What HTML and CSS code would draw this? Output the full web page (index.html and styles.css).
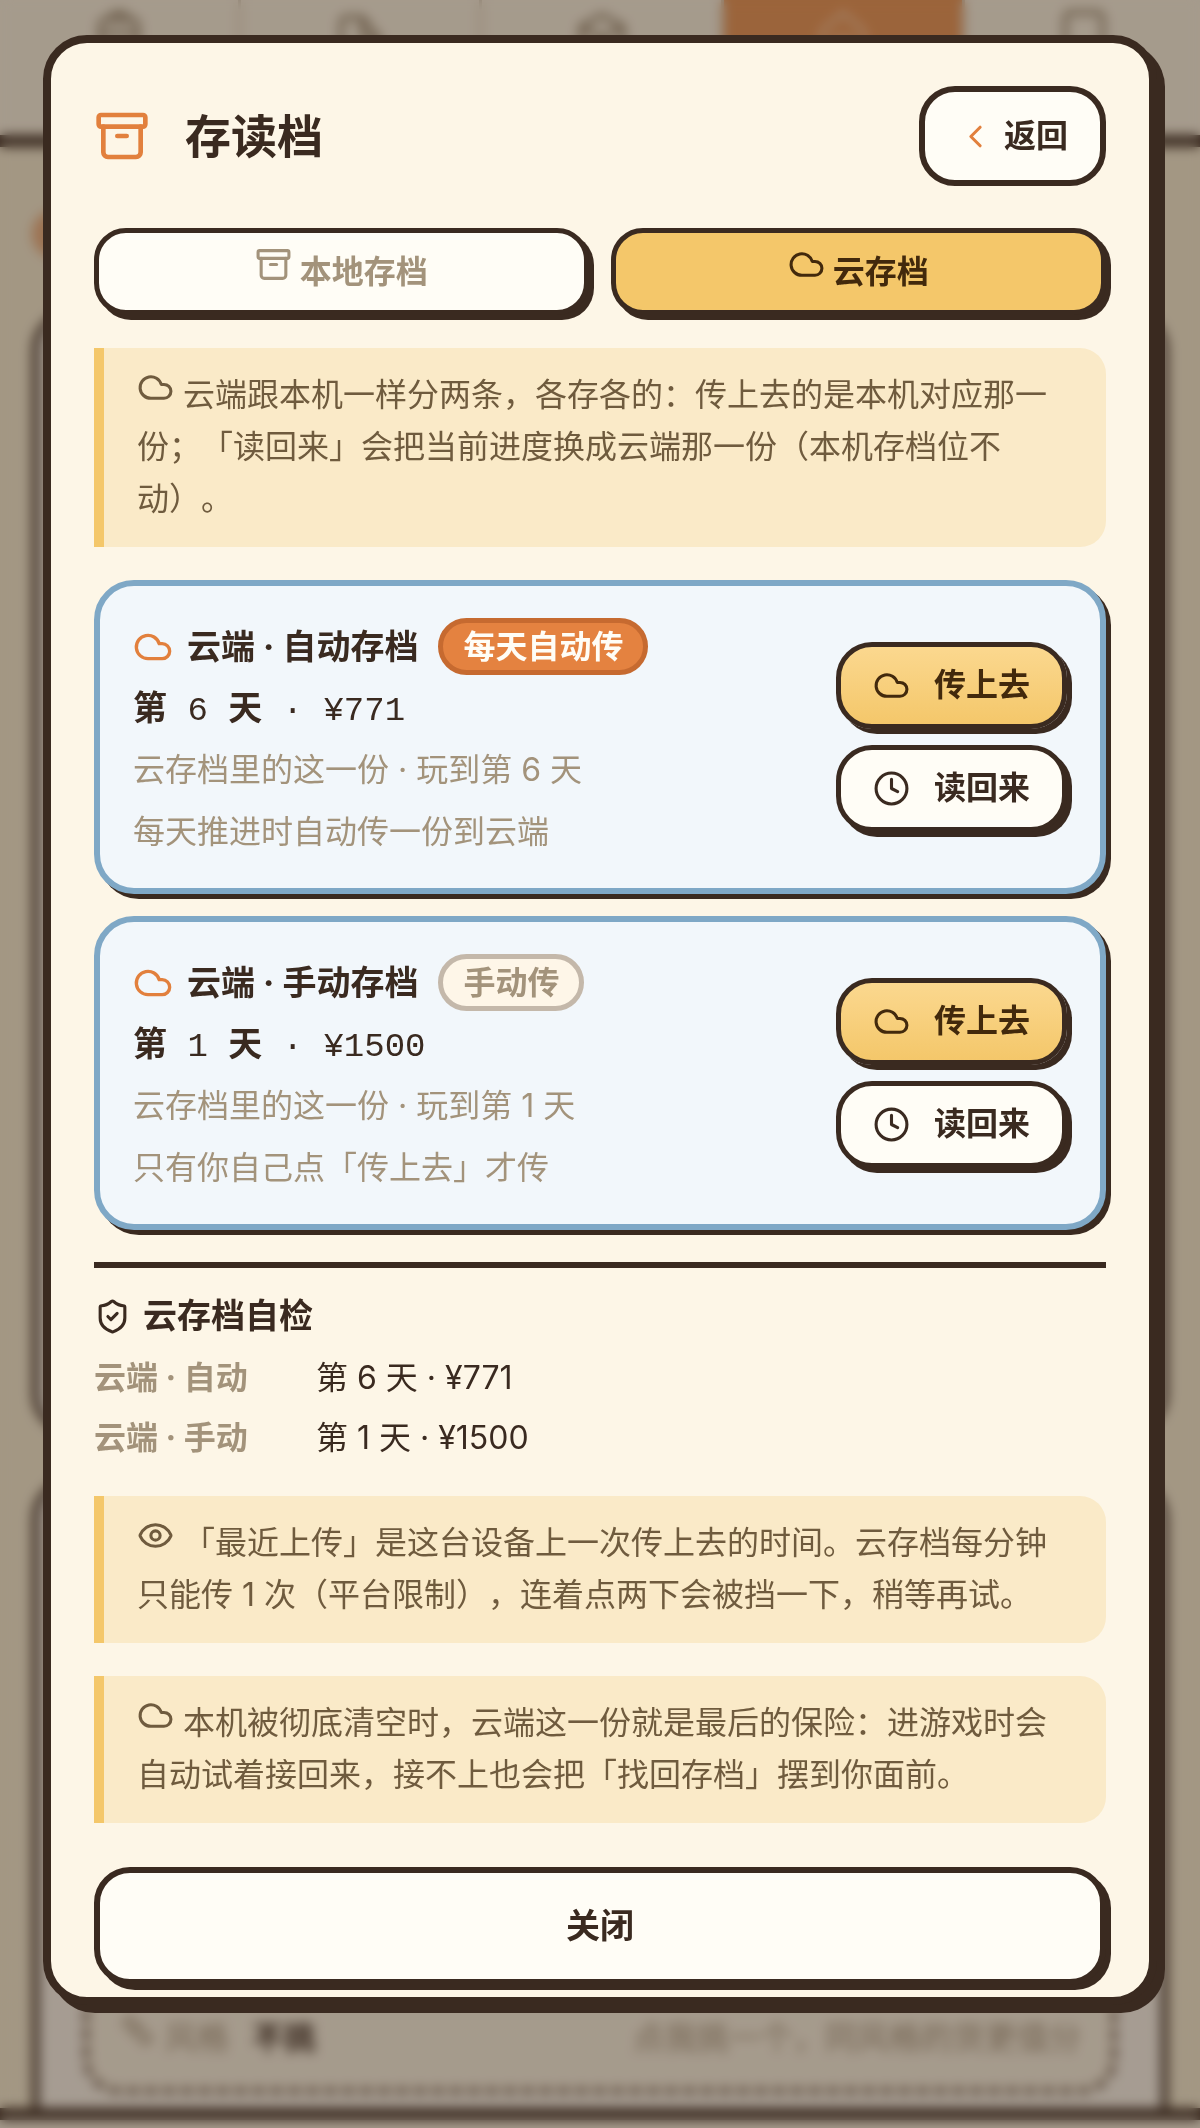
FILE: index.html
```html
<!doctype html>
<html lang="zh">
<head>
	<meta charset="UTF-8">
	<meta name="viewport" content="width=device-width, initial-scale=1.0">
	<title>存读档</title>
	<link rel="stylesheet" href="styles.css">
</head>
<body>
	<!-- 图标 -->
	<svg class="sprite" aria-hidden="true">
		<symbol id="i-cloud" viewBox="0 0 24 24"><path d="M17.5 19H9a7 7 0 1 1 6.71-9h1.79a4.5 4.5 0 1 1 0 9Z"/></symbol>
		<symbol id="i-archive" viewBox="0 0 24 24"><rect x="2" y="3" width="20" height="5" rx="1"/><path d="M4 8v11a2 2 0 0 0 2 2h12a2 2 0 0 0 2-2V8"/><path d="M10 12h4"/></symbol>
		<symbol id="i-back" viewBox="0 0 24 24"><path d="m15 18-6-6 6-6"/></symbol>
		<symbol id="i-clock" viewBox="0 0 24 24"><circle cx="12" cy="12" r="10"/><path d="M12 6v6l4 2"/></symbol>
		<symbol id="i-shield" viewBox="0 0 24 24"><path d="M20 13c0 5-3.5 7.5-7.66 8.95a1 1 0 0 1-.67-.01C7.5 20.5 4 18 4 13V6a1 1 0 0 1 1-1c2 0 4.5-1.2 6.24-2.72a1.17 1.17 0 0 1 1.52 0C14.51 3.81 17 5 19 5a1 1 0 0 1 1 1z"/><path d="m9 12 2 2 4-4"/></symbol>
		<symbol id="i-eye" viewBox="0 0 24 24"><path d="M2.06 12.35a1 1 0 0 1 0-.7 10.75 10.75 0 0 1 19.88 0 1 1 0 0 1 0 .7 10.75 10.75 0 0 1-19.88 0"/><circle cx="12" cy="12" r="3"/></symbol>
		<symbol id="i-bag" viewBox="0 0 24 24"><rect x="4" y="5" width="16" height="17" rx="2"/><path d="M4 11h16M8 5a4 3 0 0 1 8 0"/></symbol>
		<symbol id="i-tag" viewBox="0 0 24 24"><path d="M4 20V6a2 2 0 0 1 2-2h7l7 9v7z"/><path d="M13 4v9h7"/></symbol>
		<symbol id="i-box" viewBox="0 0 24 24"><path d="M21 8v8l-9 5-9-5V8l9-5z"/><path d="m3 8 9 5 9-5M12 13v8"/></symbol>
		<symbol id="i-home" viewBox="0 0 24 24"><path d="M3 21V10l9-8 9 8v11z"/><path d="M9 21v-8h6v8"/></symbol>
		<symbol id="i-book" viewBox="0 0 24 24"><rect x="4" y="2" width="16" height="20" rx="2"/></symbol>
		<symbol id="i-brush" viewBox="0 0 24 24"><path d="m3 7 4-4 14 14-4 4zM9 13l4-4"/></symbol>
	</svg>

	<!-- 弹窗后面的游戏界面 -->
	<div class="game" aria-hidden="true">
		<div class="game_nav">
			<div><svg class="icon"><use href="#i-bag"/></svg></div>
			<div><svg class="icon"><use href="#i-tag"/></svg></div>
			<div><svg class="icon"><use href="#i-box"/></svg></div>
			<div class="on"><svg class="icon"><use href="#i-home"/></svg></div>
			<div><svg class="icon"><use href="#i-book"/></svg></div>
		</div>
		<div class="game_main">
			<div class="game_title"><i class="dot"></i></div>
			<div class="panel panel_top"></div>
			<div class="panel panel_bottom">
				<div class="style_row">
					<span><svg class="icon"><use href="#i-brush"/></svg> 风格 <b>不挑</b></span>
					<span>点我挑一个，同风格的货更值分</span>
				</div>
			</div>
		</div>
		<div class="game_foot"></div>
	</div>

	<div class="mask">
		<div class="modal" role="dialog" aria-labelledby="modal_title">
			<header class="modal_head">
				<svg class="icon"><use href="#i-archive"/></svg>
				<h2 id="modal_title">存读档</h2>
				<button type="button" class="btn btn_back"><svg class="icon"><use href="#i-back"/></svg>返回</button>
			</header>

			<div class="tabs">
				<button type="button" class="tab"><svg class="icon"><use href="#i-archive"/></svg> 本地存档</button>
				<button type="button" class="tab on"><svg class="icon"><use href="#i-cloud"/></svg> 云存档</button>
			</div>

			<p class="note"><svg class="icon"><use href="#i-cloud"/></svg> 云端跟本机一样分两条，各存各的：传上去的是本机对应那一份；「读回来」会把当前进度换成云端那一份（本机存档位不动）。</p>

			<div class="slots">
				<section class="slot">
					<div class="slot_info">
						<h3><svg class="icon"><use href="#i-cloud"/></svg>云端 · 自动存档<span class="badge badge_auto">每天自动传</span></h3>
						<div class="day"><b>第</b> 6 <b>天</b> · ¥771</div>
						<p>云存档里的这一份 · 玩到第 6 天</p>
						<p>每天推进时自动传一份到云端</p>
					</div>
					<div class="slot_btns">
						<button type="button" class="btn btn_up"><svg class="icon"><use href="#i-cloud"/></svg>传上去</button>
						<button type="button" class="btn"><svg class="icon"><use href="#i-clock"/></svg>读回来</button>
					</div>
				</section>
				<section class="slot">
					<div class="slot_info">
						<h3><svg class="icon"><use href="#i-cloud"/></svg>云端 · 手动存档<span class="badge">手动传</span></h3>
						<div class="day"><b>第</b> 1 <b>天</b> · ¥1500</div>
						<p>云存档里的这一份 · 玩到第 1 天</p>
						<p>只有你自己点「传上去」才传</p>
					</div>
					<div class="slot_btns">
						<button type="button" class="btn btn_up"><svg class="icon"><use href="#i-cloud"/></svg>传上去</button>
						<button type="button" class="btn"><svg class="icon"><use href="#i-clock"/></svg>读回来</button>
					</div>
				</section>
			</div>

			<section class="check">
				<h3><svg class="icon"><use href="#i-shield"/></svg>云存档自检</h3>
				<dl>
					<dt>云端 · 自动</dt><dd>第 6 天 · ¥771</dd>
					<dt>云端 · 手动</dt><dd>第 1 天 · ¥1500</dd>
				</dl>
			</section>

			<p class="note"><svg class="icon"><use href="#i-eye"/></svg> 「最近上传」是这台设备上一次传上去的时间。云存档每分钟只能传 1 次（平台限制），连着点两下会被挡一下，稍等再试。</p>
			<p class="note"><svg class="icon"><use href="#i-cloud"/></svg> 本机被彻底清空时，云端这一份就是最后的保险：进游戏时会自动试着接回来，接不上也会把「找回存档」摆到你面前。</p>

			<button type="button" class="btn btn_close">关闭</button>
		</div>
	</div>
</body>
</html>
```
FILE: styles.css
```css
*,*::before,*::after{box-sizing:border-box;}
html,body,h2,h3,p,dl,dd,dt{
	margin:0;padding:0;
}
body{
	font-family:Inter,"Noto Sans CJK SC",sans-serif;
	font-size:32px;
	line-height:52px;
	color:#3a2a20;
	background:#f9f0d6;
	text-spacing-trim:space-all;
}
button{
	font:inherit;
	font-weight:bold;
	color:inherit;
	cursor:pointer;
}
.sprite{
	position:absolute;
	width:0;height:0;
}
.icon{
	width:37px;
	height:37px;
	flex:none;
	fill:none;
	stroke:currentColor;
	stroke-width:2;
	stroke-linecap:round;
	stroke-linejoin:round;
}

/* 背景界面 */
.game{
	position:fixed;
	top:0;left:0;right:0;bottom:0;
	display:flex;
	flex-direction:column;
	overflow:hidden;
}
.game_nav{
	display:flex;
	flex:none;
	height:147px;
	margin-right:-6px;
	background:#fef7e6;
	border-bottom:12px solid #3a2a20;
}
.game_nav div{
	flex:1;
	padding-top:8px;
	text-align:center;
	color:#8f7f66;
	border-right:3px solid #d9cdb8;
}
.game_nav .icon{
	width:56px;
	height:56px;
}
.game_nav .on{
	background:#ec9452;
	color:#fbc79b;
}
.game_main{
	flex:1;
	display:flex;
	flex-direction:column;
	padding:0 32px;
}
.game_title{
	height:163px;
	padding-top:63px;
}
.dot{
	display:block;
	width:48px;
	height:48px;
	border-radius:24px;
	background:#eeae7c;
}
.panel{
	background:#fffaf0;
	border:7px solid #3a2a20;
	border-radius:40px;
}
.panel_top{
	height:1124px;
	margin-bottom:44px;
}
.panel_bottom{
	flex:1;
	display:flex;
	flex-direction:column;
	justify-content:flex-end;
	padding:0 44px 14px;
	border-bottom:0;
	border-radius:40px 40px 0 0;
}
.style_row{
	display:flex;
	justify-content:space-between;
	padding:40px 30px 24px;
	color:#a3937b;
	background:#fef7e6;
	border:6px dashed #6f5b4a;
	border-radius:36px;
}
.style_row b{
	margin-left:14px;
	color:#3a2a20;
}
.game_foot{
	flex:none;
	height:20px;
	background:#fef7e6;
	border-top:12px solid #3a2a20;
}

/* 弹窗 */
.mask{
	position:relative;
	min-height:100vh;
	padding:35px 43px;
	background:rgba(58,42,32,.45);
	backdrop-filter:blur(6px);
}
.modal{
	padding:43px 43px 12px;
	background:#fdf6e7;
	border:8px solid #3a2a20;
	border-radius:44px;
	box-shadow:8px 8px 0 #3a2a20;
}
.modal_head{
	display:flex;
	align-items:center;
	gap:35px;
	margin-bottom:42px;
}
.modal_head h2{
	flex:1;
	font-size:46px;
}
.modal_head>.icon{
	width:56px;
	height:56px;
	color:#e2803d;
}
.btn{
	display:flex;
	align-items:center;
	justify-content:center;
	gap:24px;
	padding:0 32px;
	height:87px;
	background:#fffdf6;
	border:5px solid #3a2a20;
	border-radius:36px;
	box-shadow:5px 5px 0 #3a2a20;
}
.btn_back{
	height:100px;
	gap:10px;
	border-width:6px;
	box-shadow:none;
}
.btn_back .icon{
	color:#e2803d;
}
.btn_up{
	color:#42290c;
	background:linear-gradient(#fbd88f,#f4c76a);
}
.btn_close{
	width:100%;
	height:118px;
	margin-top:44px;
	border-width:6px;
	font-size:34px;
}
.tabs{
	display:flex;
	gap:22px;
	margin-bottom:33px;
}
.tab{
	flex:1;
	height:87px;
	padding:0;
	color:#a3937b;
	background:#fffdf6;
	border:5px solid #3a2a20;
	border-radius:32px;
	box-shadow:5px 5px 0 #3a2a20;
}
.tab.on{
	color:#42290c;
	background:#f4c76a;
}
.note{
	padding:21px 33px 22px;
	color:#6f5b3e;
	background:#faeac8;
	border-left:10px solid #f4c76a;
	border-radius:0 26px 26px 0;
}
.note+.note{
	margin-top:33px;
}
.slots{
	display:grid;
	gap:22px;
	margin:33px 0 32px;
}
.slot{
	display:flex;
	justify-content:space-between;
	align-items:center;
	padding:32px 33px 25px;
	background:#f2f7fb;
	border:6px solid #7fa8c6;
	border-radius:40px;
	box-shadow:5px 5px 0 #3a2a20;
}
.slot h3{
	display:flex;
	align-items:center;
	margin-bottom:8px;
	font-size:34px;
}
.slot h3 .icon{
	width:40px;
	height:40px;
	margin-right:14px;
	color:#e2803d;
}
.badge{
	margin-left:20px;
	padding:0 20px;
	font-size:32px;
	line-height:47px;
	color:#a3937b;
	background:#fef6e8;
	border:5px solid #c4b8aa;
	border-radius:30px;
}
.badge_auto{
	color:#fffdf6;
	background:#e48240;
	border-color:#c66a30;
}
.day{
	font-family:"Liberation Mono","Noto Sans CJK SC",monospace;
	font-size:34px;
	line-height:56px;
}
.slot p{
	line-height:62px;
	color:#a3937b;
}
.slot_btns{
	display:grid;
	gap:16px;
	margin-bottom:8px;
}
.check{
	padding-top:18px;
	margin-bottom:28px;
	border-top:6px solid #3a2a20;
	line-height:60px;
}
.check h3{
	display:flex;
	align-items:center;
	gap:12px;
	margin-bottom:2px;
	font-size:34px;
}
.check dl{
	display:grid;
	grid-template-columns:200px 1fr;
	column-gap:22px;
}
.check dt{
	font-weight:bold;
	color:#a3937b;
}
```
